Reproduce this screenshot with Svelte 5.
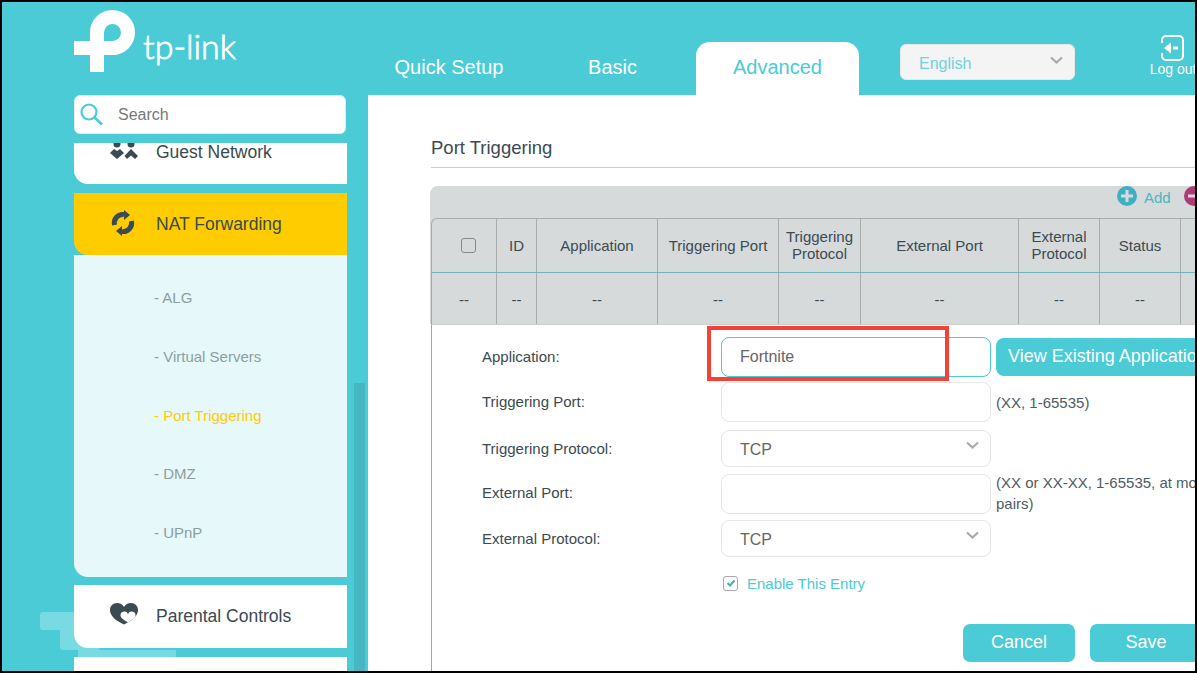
<script>
  const columns = [
    { label: "", width: 65, check: true },
    { label: "ID", width: 40 },
    { label: "Application", width: 121 },
    { label: "Triggering Port", width: 121 },
    { label: "Triggering Protocol", width: 82, two: true },
    { label: "External Port", width: 158 },
    { label: "External Protocol", width: 81, two: true },
    { label: "Status", width: 81 },
    { label: "", width: 60 },
  ];
  const submenu = ["ALG", "Virtual Servers", "Port Triggering", "DMZ", "UPnP"];
  const activeSub = "Port Triggering";
  let application = "Fortnite";
  let enabled = true;
</script>

<div class="frame">
  <header>
    <div class="logo">
      <svg width="64" height="64" viewBox="0 0 64 64">
        <path d="M23 62V22.500a15.500 15.500 0 1 1 15.500 15.500H0" fill="none" stroke="#fff" stroke-width="14" />
      </svg>
      <span class="wordmark">tp-link</span>
    </div>
    <nav class="tabs">
      <a href="#quick" class="tab quick">Quick Setup</a>
      <a href="#basic" class="tab basic">Basic</a>
      <a href="#advanced" class="tab advanced">Advanced</a>
    </nav>
    <div class="lang">
      <span>English</span>
      <svg class="chev" width="13" height="8" viewBox="0 0 13 8"><path d="M1 1.500l5.500 5 5.500-5" fill="none" stroke="#aaa" stroke-width="2.200" /></svg>
    </div>
    <div class="logout">
      <svg width="24" height="26" viewBox="0 0 24 26">
        <path d="M2 8V5a4 4 0 0 1 4-4h13a4 4 0 0 1 4 4v16a4 4 0 0 1-4 4H6a4 4 0 0 1-4-4v-3" fill="none" stroke="#fff" stroke-width="2" />
        <path d="M4 13l7-5.500v11zM13 11.500h5v3h-5z" fill="#fff" />
      </svg>
      <span>Log out</span>
    </div>
  </header>

  <div class="body">
    <aside>
      <div class="watermark w1"></div>
      <div class="watermark w2"></div>
      <div class="watermark w3"></div>
      <div class="search">
        <svg width="26" height="26" viewBox="0 0 26 26">
          <circle cx="9" cy="10" r="7.500" fill="none" stroke="#4acbd6" stroke-width="2.200" />
          <path d="M14.500 15.500l7.500 7" stroke="#4acbd6" stroke-width="2.600" />
        </svg>
        <span>Search</span>
      </div>
      <div class="menu">
        <div class="item guest">
          <svg class="ico" width="28" height="18" viewBox="0 0 28 18">
            <circle cx="7" cy="1" r="3.500" fill="#3c4a52" /><circle cx="21" cy="1" r="3.500" fill="#3c4a52" />
            <path d="M0 10l4-4 3 2 3-2 4 4-7 6zM21 6l7 7-3 3-4-3.500-4 3.500-2.500-3z" fill="#3c4a52" />
          </svg>
          <span>Guest Network</span>
        </div>
        <div class="item active">
          <svg class="ico" width="26" height="26" viewBox="0 0 26 26">
            <path d="M4.600 15A8.500 8.500 0 0 1 14 4.500M21.400 11A8.500 8.500 0 0 1 12 21.500" fill="none" stroke="#3c4a52" stroke-width="5" />
            <path d="M14 0l6 5-6 5zM12 16l-6 5 6 5z" fill="#3c4a52" />
          </svg>
          <span>NAT Forwarding</span>
        </div>
        <div class="sub">
          {#each submenu as s}
            <a href="#sub" class="subitem" class:current={s === activeSub}>- {s}</a>
          {/each}
        </div>
        <div class="item parental">
          <svg class="ico" width="28" height="22" viewBox="0 0 28 22">
            <path d="M14 21.500C6 18 0 13 0 7C0 3 3 0 7 0C10 0 12.500 1.500 14 4C15.500 1.500 18 0 21 0C25 0 28 3 28 7C28 13 22 18 14 21.500z" fill="#3c4a52" />
            <path d="M18 19.500C14 17 10.500 15 10.500 12.500A3.800 3.800 0 0 1 18 11.500A3.800 3.800 0 0 1 25.500 12.500C25.500 15 22 17 18 19.500z" fill="#fff" />
          </svg>
          <span>Parental Controls</span>
        </div>
        <div class="item last"></div>
      </div>
    </aside>
    <div class="track"></div>

    <main>
      <h1>Port Triggering</h1>
      <div class="panel">
        <div class="actions">
          <svg width="20" height="20" viewBox="0 0 20 20">
            <circle cx="10" cy="10" r="10" fill="#3fb0c0" /><path d="M10 4v12M4 10h12" stroke="#d6dadb" stroke-width="3" />
          </svg>
          <span class="add">Add</span>
          <svg width="20" height="20" viewBox="0 0 20 20">
            <circle cx="10" cy="10" r="10" fill="#b03a78" /><path d="M4 10h12" stroke="#d6dadb" stroke-width="3" />
          </svg>
        </div>
        <div class="table">
          <div class="row head">
            {#each columns as c}
              <div class="cell" class:two={c.two} style="width:{c.width}px">
                {#if c.check}<span class="box"></span>{:else}{c.label}{/if}
              </div>
            {/each}
          </div>
          <div class="row data">
            {#each columns as c, i}
              <div class="cell" style="width:{c.width}px">{i < 8 ? "--" : ""}</div>
            {/each}
          </div>
        </div>
      </div>

      <form class="editor" on:submit|preventDefault>
        <div class="highlight"></div>
        <div class="field app">
          <label for="app">Application:</label>
          <input id="app" class="focus" bind:value={application} />
          <button type="button" class="view">View Existing Applications</button>
        </div>
        <div class="field tport">
          <label for="tport">Triggering Port:</label>
          <input id="tport" />
          <span class="hint">(XX, 1-65535)</span>
        </div>
        <div class="field tproto">
          <label for="tproto">Triggering Protocol:</label>
          <div id="tproto" class="select">TCP
            <svg class="chev" width="13" height="8" viewBox="0 0 13 8"><path d="M1 1.500l5.500 5 5.500-5" fill="none" stroke="#aaa" stroke-width="2.200" /></svg>
          </div>
        </div>
        <div class="field eport">
          <label for="eport">External Port:</label>
          <input id="eport" />
          <span class="hint wrap">(XX or XX-XX, 1-65535, at most 5 pairs)</span>
        </div>
        <div class="field eproto">
          <label for="eproto">External Protocol:</label>
          <div id="eproto" class="select">TCP
            <svg class="chev" width="13" height="8" viewBox="0 0 13 8"><path d="M1 1.500l5.500 5 5.500-5" fill="none" stroke="#aaa" stroke-width="2.200" /></svg>
          </div>
        </div>
        <div class="enable">
          <span class="tick" class:on={enabled}>
            <svg width="10" height="10" viewBox="0 0 10 10"><path d="M1.500 5l2.500 2.500 4.500-5" fill="none" stroke="#3fb0c0" stroke-width="2" /></svg>
          </span>
          Enable This Entry
        </div>
        <div class="buttons">
          <button type="button" class="btn">Cancel</button>
          <button type="submit" class="btn">Save</button>
        </div>
      </form>
    </main>
  </div>
</div>

<style>
  :global(body) {
    margin: 0;
    font-family: "Liberation Sans", Arial, sans-serif;
  }

  .frame {
    width: 1197px;
    height: 673px;
    box-sizing: border-box;
    border: 2px solid #000;
    background: #4acbd6;
    overflow: hidden;
    display: flex;
    flex-direction: column;
  }

  header {
    height: 93px;
    flex: none;
    display: flex;
    padding-left: 72px;
  }

  .logo {
    width: 290px;
    flex: none;
    display: flex;
    padding-top: 8px;
    box-sizing: border-box;
  }
  .logo svg { flex: none; }
  .wordmark {
    font-family: Lato, sans-serif;
    font-size: 34px;
    font-weight: 300;
    color: #fff;
    line-height: 1;
    margin: 19px 0 0 5px;
    -webkit-text-stroke: 0.8px #fff;
  }

  .tabs {
    display: flex;
    flex: none;
    align-items: flex-end;
    margin-left: 5px;
  }
  .tab {
    display: block;
    height: 53px;
    line-height: 51px;
    text-align: center;
    font-size: 20px;
    color: #fff;
    text-decoration: none;
  }
  .quick { width: 160px; }
  .basic { width: 167px; }
  .advanced {
    width: 163px;
    background: #fff;
    color: #4acbd6;
    border-radius: 14px 14px 0 0;
  }

  .lang {
    margin: 42px 0 0 41px;
    width: 175px;
    height: 36px;
    box-sizing: border-box;
    background: #f4f4f4;
    border: 1px solid #e8e8e8;
    border-radius: 6px;
    display: flex;
    align-items: center;
    justify-content: space-between;
    padding: 0 11px 0 18px;
    font-size: 16px;
    color: #6fd3dc;
    flex: none;
  }
  .lang span { margin-top: 3px; }
  .lang .chev { margin-top: -4px; }

  .logout {
    margin: 33px 0 0 74px;
    display: flex;
    flex-direction: column;
    align-items: center;
    width: 48px;
    flex: none;
    color: #fff;
    font-size: 14px;
    white-space: nowrap;
  }
  .logout svg { margin-left: -2px; }

  .body {
    flex: 1;
    min-height: 0;
    display: flex;
    position: relative;
  }

  aside {
    width: 273px;
    margin-left: 72px;
    flex: none;
    position: relative;
  }

  .watermark {
    position: absolute;
    background: #78dbe3;
    border-radius: 3px;
  }
  .w1 { left: -34px; top: 517px; width: 40px; height: 18px; }
  .w2 { left: -14px; top: 530px; width: 40px; height: 25px; }
  .w3 { left: 4px; top: 555px; width: 98px; height: 7px; border-radius: 0; }

  .search {
    position: relative;
    width: 272px;
    height: 39px;
    box-sizing: border-box;
    background: #fff;
    border: 1px solid #e4e8e8;
    border-radius: 6px;
    display: flex;
    align-items: center;
    padding-left: 5px;
    font-size: 16px;
    color: #777;
  }
  .search span { margin-left: 12px; }

  .menu {
    position: relative;
    margin-top: 9px;
    display: flex;
    flex-direction: column;
  }

  .item {
    display: flex;
    align-items: center;
    background: #fff;
    font-size: 17.500px;
    color: #3b4a52;
    border-bottom-left-radius: 14px;
    position: relative;
    padding-left: 82px;
  }
  .ico {
    position: absolute;
    left: 36px;
  }
  .guest {
    height: 41px;
    align-items: flex-start;
    margin-bottom: 9px;
  }
  .guest span { margin-top: -1px; }
  .guest .ico { top: 0; }
  .active {
    height: 62px;
    background: #ffcc00;
  }
  .active .ico { top: 17px; }
  .sub {
    height: 322px;
    box-sizing: border-box;
    background: #e6f8f9;
    border-bottom-left-radius: 14px;
    padding: 14px 0 0 80px;
    margin-bottom: 8px;
    display: flex;
    flex-direction: column;
  }
  .subitem {
    height: 58.800px;
    line-height: 58.800px;
    font-size: 15px;
    color: #8d9ea0;
    text-decoration: none;
  }
  .subitem.current { color: #ffcc00; }
  .parental {
    height: 63px;
    margin-bottom: 9px;
  }
  .parental .ico { top: 18px; }
  .last { height: 30px; }

  .track {
    width: 11px;
    flex: none;
    margin: 288px 0 0 7px;
    background: #44b8c2;
  }

  main {
    flex: 1;
    margin-left: 3px;
    background: #fff;
    padding: 0 0 0 63px;
    min-width: 0;
    overflow: hidden;
    position: relative;
  }

  h1 {
    margin: 0;
    padding-top: 42px;
    height: 30px;
    font-size: 18.500px;
    font-weight: 400;
    color: #3b4a52;
    line-height: 22px;
    border-bottom: 1px solid #ccc;
  }

  .panel {
    margin: 18px 0 0 -1px;
    width: 820px;
    background: #d6dadb;
    border-radius: 8px 8px 0 0;
  }
  .actions {
    height: 32px;
    display: flex;
    align-items: flex-start;
    padding-left: 687px;
    color: #4db5c4;
  }
  .actions svg { flex: none; }
  .add {
    font-size: 15px;
    margin: 3px 13px 0 7px;
  }

  .table {
    margin-left: 1px;
    border-left: 1px solid #aaa;
    border-top: 1px solid #aaa;
    border-radius: 6px 0 0 0;
  }
  .row { display: flex; }
  .cell {
    flex: none;
    box-sizing: border-box;
    border-right: 1px solid #aaa;
    display: flex;
    align-items: center;
    justify-content: center;
    text-align: center;
    font-size: 15px;
    line-height: 17px;
    color: #3b4a52;
  }
  .head .cell { height: 53px; }
  .head .cell.two { padding-bottom: 2px; }
  .data {
    border-top: 1px solid #6fb3ba;
    box-shadow: -1px 0 0 #4acbd6;
  }
  .data .cell { height: 51px; padding-top: 2px; }
  .box {
    width: 15px;
    height: 15px;
    box-sizing: border-box;
    border: 1px solid #888;
    border-radius: 3px;
    margin-left: 9px;
  }

  .editor {
    position: relative;
    border-left: 1px solid #4acbd6;
    height: 360px;
    box-sizing: border-box;
    border-top: 1px solid #ccc;
    padding: 12px 0 0 50px;
    font-size: 15px;
    color: #3b4a52;
    width: 820px;
  }

  .highlight {
    position: absolute;
    left: 275px;
    top: 1px;
    width: 242px;
    height: 55px;
    box-sizing: border-box;
    border: 4px solid #f44336;
    z-index: 2;
    pointer-events: none;
  }

  .field {
    display: flex;
    align-items: center;
    position: relative;
  }
  .field label { width: 239px; flex: none; }
  .app label, .tport label { margin-top: -2px; }
  .eport label { margin-top: -3px; }
  .field input, .select {
    flex: none;
    width: 270px;
    box-sizing: border-box;
    border: 1px solid #e6e6e6;
    border-radius: 8px;
    background: #fff;
    font: inherit;
    font-size: 16px;
    color: #666;
    padding: 0 18px;
    margin: 0;
    outline: none;
    height: 40px;
  }
  .field input.focus { border-color: #4acbd6; }
  .select {
    height: 37px;
    display: flex;
    align-items: center;
    justify-content: space-between;
    padding-top: 2px;
    padding-right: 11px;
  }
  .select .chev { margin-top: -9px; }

  .app { margin-bottom: 5px; }
  .tport { margin-bottom: 8px; }
  .tproto { margin-bottom: 7px; }
  .eport { margin-bottom: 6px; height: 40px; }
  .eproto { margin-bottom: 17px; }

  .view {
    margin-left: 5px;
    flex: none;
    width: 230px;
    height: 38px;
    border: none;
    border-radius: 8px 0 0 8px;
    background: #4acbd6;
    color: #fff;
    font: inherit;
    font-size: 18px;
    text-align: left;
    padding: 0 12px 2px;
    white-space: nowrap;
  }

  .hint { margin-left: 5px; white-space: nowrap; color: #4f5c62; }
  .hint.wrap { white-space: normal; width: 240px; line-height: 21px; margin-top: -2px; }

  .enable {
    display: flex;
    align-items: center;
    margin-left: 241px;
    font-size: 15px;
    color: #4acbd6;
    height: 18px;
  }
  .tick {
    width: 15px;
    height: 15px;
    box-sizing: border-box;
    border: 1px solid #aaa;
    border-radius: 3px;
    margin-right: 9px;
    display: flex;
    align-items: center;
    justify-content: center;
  }

  .buttons {
    display: flex;
    gap: 15px;
    margin: 32px 0 0 481px;
  }
  .btn {
    flex: none;
    width: 112px;
    height: 38px;
    border: none;
    border-radius: 7px;
    background: #4acbd6;
    color: #fff;
    font: inherit;
    font-size: 18px;
    padding: 0 0 2px;
  }
</style>
